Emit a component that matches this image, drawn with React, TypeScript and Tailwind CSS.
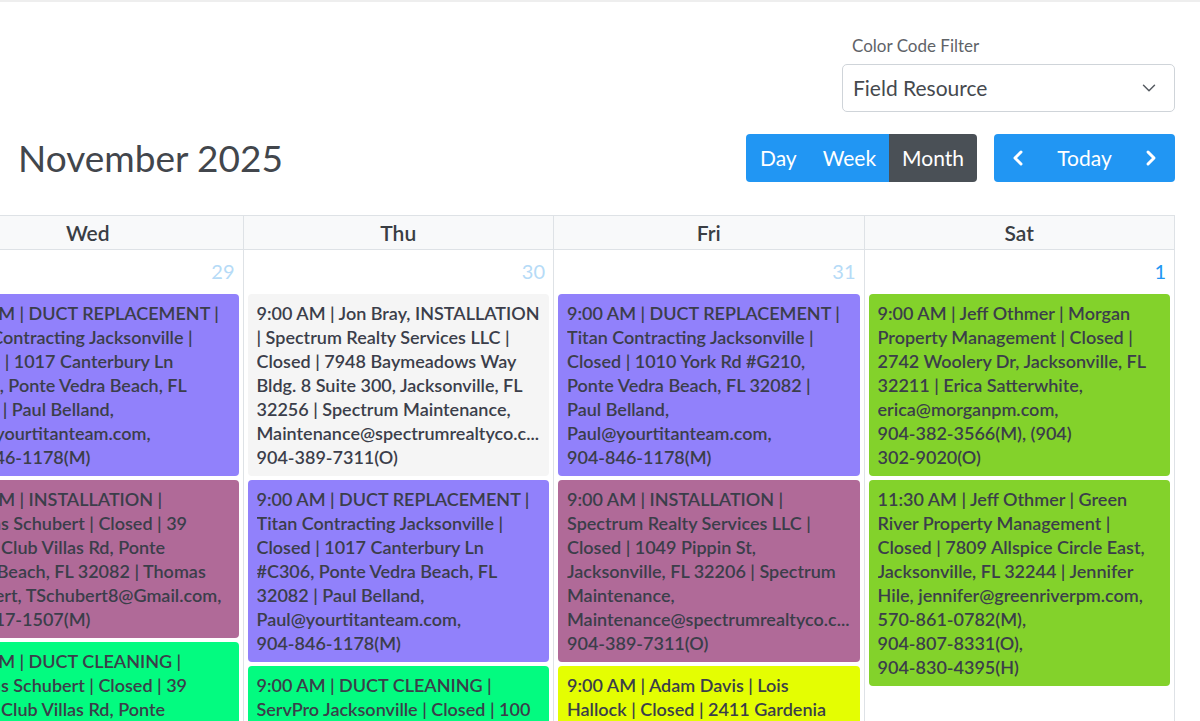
import React from 'react';
import { ChevronDown, ChevronLeft, ChevronRight } from 'lucide-react';

type CalEvent = { color: string; lines: string[] };
type DayCol = { name: string; date: string; current?: boolean; events: CalEvent[] };

const purple = 'bg-[#9181fb]';
const mauve = 'bg-[#b06a98]';
const gray = 'bg-[#f5f5f5]';
const mint = 'bg-[#03fb80]';
const yellow = 'bg-[#e4fe02]';
const lime = 'bg-[#83d22b]';

const titanCanterbury = [
  '9:00 AM | DUCT REPLACEMENT |',
  'Titan Contracting Jacksonville |',
  'Closed | 1017 Canterbury Ln',
  '#C306, Ponte Vedra Beach, FL',
  '32082 | Paul Belland,',
  'Paul@yourtitanteam.com,',
  '904-846-1178(M)',
];

const days: DayCol[] = [
  {
    name: 'Wed',
    date: '29',
    events: [
      { color: purple, lines: titanCanterbury },
      {
        color: mauve,
        lines: [
          '9:00 AM | INSTALLATION |',
          'Thomas Schubert | Closed | 39',
          'Tennis Club Villas Rd, Ponte',
          'Vedra Beach, FL 32082 | Thomas',
          'Schubert, TSchubert8@Gmail.com,',
          '904-417-1507(M)',
        ],
      },
      {
        color: mint,
        lines: [
          '9:00 AM | DUCT CLEANING |',
          'Thomas Schubert | Closed | 39',
          'Tennis Club Villas Rd, Ponte',
          'Vedra Beach, FL 32082 | Thomas',
        ],
      },
    ],
  },
  {
    name: 'Thu',
    date: '30',
    events: [
      {
        color: gray,
        lines: [
          '9:00 AM | Jon Bray, INSTALLATION',
          '| Spectrum Realty Services LLC |',
          'Closed | 7948 Baymeadows Way',
          'Bldg. 8 Suite 300, Jacksonville, FL',
          '32256 | Spectrum Maintenance,',
          'Maintenance@spectrumrealtyco.c...',
          '904-389-7311(O)',
        ],
      },
      { color: purple, lines: titanCanterbury },
      {
        color: mint,
        lines: [
          '9:00 AM | DUCT CLEANING |',
          'ServPro Jacksonville | Closed | 100',
          'Business Park Blvd, Jacksonville,',
        ],
      },
    ],
  },
  {
    name: 'Fri',
    date: '31',
    events: [
      {
        color: purple,
        lines: [
          '9:00 AM | DUCT REPLACEMENT |',
          'Titan Contracting Jacksonville |',
          'Closed | 1010 York Rd #G210,',
          'Ponte Vedra Beach, FL 32082 |',
          'Paul Belland,',
          'Paul@yourtitanteam.com,',
          '904-846-1178(M)',
        ],
      },
      {
        color: mauve,
        lines: [
          '9:00 AM | INSTALLATION |',
          'Spectrum Realty Services LLC |',
          'Closed | 1049 Pippin St,',
          'Jacksonville, FL 32206 | Spectrum',
          'Maintenance,',
          'Maintenance@spectrumrealtyco.c...',
          '904-389-7311(O)',
        ],
      },
      {
        color: yellow,
        lines: [
          '9:00 AM | Adam Davis | Lois',
          'Hallock | Closed | 2411 Gardenia',
          'Ave, Jacksonville, FL 32207',
        ],
      },
    ],
  },
  {
    name: 'Sat',
    date: '1',
    current: true,
    events: [
      {
        color: lime,
        lines: [
          '9:00 AM | Jeff Othmer | Morgan',
          'Property Management | Closed |',
          '2742 Woolery Dr, Jacksonville, FL',
          '32211 | Erica Satterwhite,',
          'erica@morganpm.com,',
          '904-382-3566(M), (904)',
          '302-9020(O)',
        ],
      },
      {
        color: lime,
        lines: [
          '11:30 AM | Jeff Othmer | Green',
          'River Property Management |',
          'Closed | 7809 Allspice Circle East,',
          'Jacksonville, FL 32244 | Jennifer',
          'Hile, jennifer@greenriverpm.com,',
          '570-861-0782(M),',
          '904-807-8331(O),',
          '904-830-4395(H)',
        ],
      },
    ],
  },
];

const font = { fontFamily: 'Lato, "Noto Sans", sans-serif' };

function EventCard({ ev }: { ev: CalEvent }) {
  return (
    <div className={`${ev.color} rounded-[4px] px-[9px] py-[7px] text-[18px] leading-[24px] font-semibold text-[#3b3e4a]`}>
      {ev.lines.map((l, i) => (
        <div key={i} className="whitespace-nowrap overflow-hidden">
          {l}
        </div>
      ))}
    </div>
  );
}

export default function App() {
  return (
    <div className="h-[721px] w-[1200px] overflow-hidden bg-white border-t-2 border-[#eeeeee]" style={font}>
      {/* filter */}
      <div className="flex justify-end pr-[25px] pt-[34px]">
        <div className="w-[333px]">
          <div className="text-[17px] leading-[20px] text-[#5f6368] pl-[10px] mb-[8px]">Color Code Filter</div>
          <div className="h-[48px] border border-[#cfd4d9] rounded-[5px] flex items-center justify-between pl-[10px] pr-[14px]">
            <span className="text-[21px] text-[#45494e]">Field Resource</span>
            <ChevronDown size={22} strokeWidth={1.6} className="text-[#555a60]" />
          </div>
        </div>
      </div>

      {/* toolbar */}
      <div className="flex items-center justify-between pl-[18px] pr-[25px] mt-[22px]">
        <h1 className="text-[37px] leading-[48px] text-[#42464c] font-normal">November 2025</h1>
        <div className="flex items-center gap-[17px]">
          <div className="flex h-[48px] rounded-[4px] overflow-hidden text-[21px] text-white">
            <button className="bg-[#2196f3] pl-[14px] pr-[13px]">Day</button>
            <button className="bg-[#2196f3] px-[13px]">Week</button>
            <button className="bg-[#4a5056] px-[13px]">Month</button>
          </div>
          <div className="flex items-center h-[48px] w-[181px] rounded-[4px] bg-[#2196f3] text-white text-[21px] justify-between px-[12px]">
            <ChevronLeft size={24} strokeWidth={3} />
            <span>Today</span>
            <ChevronRight size={24} strokeWidth={3} />
          </div>
        </div>
      </div>

      {/* calendar */}
      <div className="mt-[33px] pr-[25px] overflow-hidden">
        <div className="ml-[-68px] w-[1243px] border-t border-r border-[#dee2e6]">
          <div className="grid grid-cols-4 bg-[#f8f9fa] border-b border-[#dee2e6]">
            {days.map((d) => (
              <div key={d.name} className="h-[33px] flex items-center justify-center border-l border-[#dee2e6] text-[21px] font-semibold text-[#3a3e44]">
                {d.name}
              </div>
            ))}
          </div>
          <div className="grid grid-cols-4">
            {days.map((d) => (
              <div key={d.name} className="border-l border-[#dee2e6] px-[4px] h-[520px]">
                <div className={`text-right text-[20px] leading-[26px] pt-[8px] pr-[4px] mb-[10px] ${d.current ? 'text-[#2196f3]' : 'text-[#b6dbf7]'}`}>
                  {d.date}
                </div>
                <div className="flex flex-col gap-[4px]">
                  {d.events.map((ev, i) => (
                    <EventCard key={i} ev={ev} />
                  ))}
                </div>
              </div>
            ))}
          </div>
        </div>
      </div>
    </div>
  );
}
